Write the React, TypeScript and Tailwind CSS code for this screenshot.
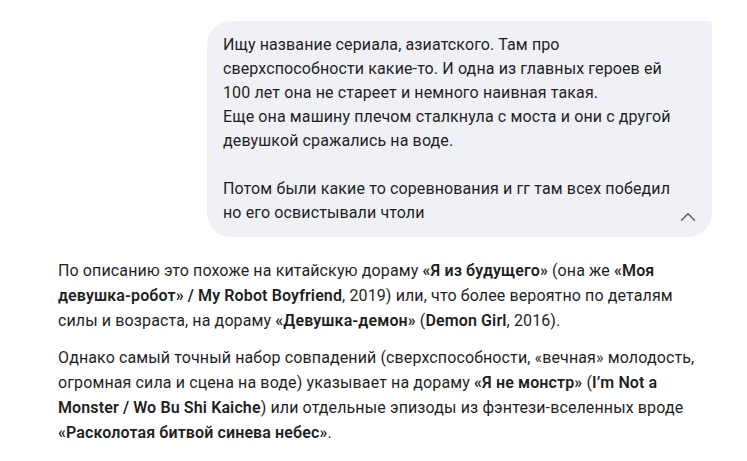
import { ChevronUp } from "lucide-react";
import { type ReactElement } from "react";

const userLines = [
  "Ищу название сериала, азиатского. Там про",
  "сверхспособности какие-то. И одна из главных героев ей",
  "100 лет она не стареет и немного наивная такая.",
  "Еще она машину плечом сталкнула с моста и они с другой",
  "девушкой сражались на воде.",
  "",
  "Потом были какие то соревнования и гг там всех победил",
  "но его освистывали чтоли",
];

function UserBubble(): ReactElement {
  return (
    <div className="flex justify-end">
      <div className="flex w-[505px] rounded-3xl rounded-tr-[4px] bg-[#eff1f6] py-3 pl-4 pr-3">
        <p className="flex-1 text-base leading-6 tracking-[0.12px] text-[#1f1f1f]">
          {userLines.map((line, i) => (
            <span key={i} className="block min-h-6">
              {line}
            </span>
          ))}
        </p>
        <button className="self-end -mb-1 flex size-6 items-center justify-center text-[#5f6368]">
          <ChevronUp className="size-[26px] shrink-0" strokeWidth={1.5} />
        </button>
      </div>
    </div>
  );
}

export default function App(): ReactElement {
  return (
    <div className="min-h-screen bg-white font-['Roboto',sans-serif]">
      <div className="pl-[58px] pr-[35px] pt-[21px]">
        <UserBubble />

        <div className="mt-[21px] text-base leading-[25px] tracking-[0.12px] text-[#1f1f1f]">
          <p>
            По описанию это похоже на китайскую дораму <b className="font-semibold">«Я из будущего»</b> (она же{" "}
            <b className="font-semibold">«Моя девушка-робот» / My Robot Boyfriend</b>, 2019) или, что более вероятно по
            деталям силы и возраста, на дораму <b className="font-semibold">«Девушка-демон»</b> (
            <b className="font-semibold">Demon Girl</b>, 2016).
          </p>
          <p className="mt-3">
            Однако самый точный набор совпадений (сверхспособности, «вечная» молодость, огромная сила и сцена на воде)
            указывает на дораму <b className="font-semibold">«Я не монстр»</b> (
            <b className="font-semibold">I’m Not a Monster / Wo Bu Shi Kaiche</b>) или отдельные эпизоды из
            фэнтези-вселенных вроде <b className="font-semibold">«Расколотая битвой синева небес»</b>.
          </p>
        </div>
      </div>
    </div>
  );
}
